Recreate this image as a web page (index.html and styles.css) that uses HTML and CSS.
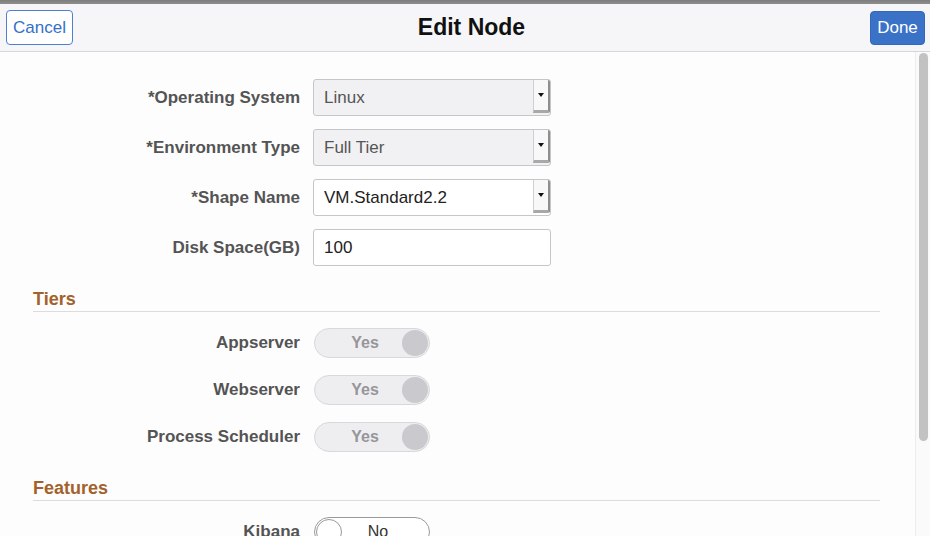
FILE: index.html
```html
<!DOCTYPE html>
<html>
<head>
<meta charset="utf-8">
<title>Edit Node</title>
<link rel="stylesheet" href="styles.css">
</head>
<body>
<div class="page">
  <div class="topstrip"></div>
  <header class="header">
    <button class="btn btn-cancel">Cancel</button>
    <h1 class="title">Edit Node</h1>
    <button class="btn btn-done">Done</button>
  </header>
  <div class="body">
    <main class="content">
      <div class="form">
        <label class="label">*Operating System</label>
        <div class="select disabled"><span class="select-text">Linux</span><span class="select-btn"><span class="tri"></span></span></div>

        <label class="label">*Environment Type</label>
        <div class="select disabled"><span class="select-text">Full Tier</span><span class="select-btn"><span class="tri"></span></span></div>

        <label class="label">*Shape Name</label>
        <div class="select"><span class="select-text">VM.Standard2.2</span><span class="select-btn"><span class="tri"></span></span></div>

        <label class="label">Disk Space(GB)</label>
        <div class="input">100</div>
      </div>

      <h2 class="section">Tiers</h2>
      <div class="toggles">
        <span class="label">Appserver</span>
        <div class="toggle on"><span class="toggle-text">Yes</span><span class="knob"></span></div>
        <span class="label">Webserver</span>
        <div class="toggle on"><span class="toggle-text">Yes</span><span class="knob"></span></div>
        <span class="label">Process Scheduler</span>
        <div class="toggle on"><span class="toggle-text">Yes</span><span class="knob"></span></div>
      </div>

      <h2 class="section section-features">Features</h2>
      <div class="toggles">
        <span class="label">Kibana</span>
        <div class="toggle off"><span class="knob"></span><span class="toggle-text">No</span></div>
      </div>
    </main>
    <div class="scrollbar"><div class="thumb"></div></div>
  </div>
</div>
</body>
</html>
```
FILE: styles.css
```css
* { box-sizing: border-box; }
html, body { margin: 0; padding: 0; }
body {
  font-family: "Liberation Sans", Arial, sans-serif;
  background: #fdfdfd;
  width: 930px;
  height: 536px;
  overflow: hidden;
}
.page {
  display: flex;
  flex-direction: column;
  height: 536px;
}
.topstrip {
  height: 4px;
  background: linear-gradient(#7c7c7c, #8e8e8e);
  flex: none;
}
.header {
  flex: none;
  height: 48px;
  background: #f6f6f8;
  border-bottom: 1px solid #d6d6d8;
  display: flex;
  align-items: center;
  justify-content: space-between;
  padding: 0 5px 0 6px;
}
.btn {
  font-family: "Liberation Sans", Arial, sans-serif;
  font-size: 17px;
  height: 35px;
  border-radius: 4px;
  padding: 0 6px;
  cursor: pointer;
}
.btn-cancel {
  width: 67px;
  background: #ffffff;
  color: #3570c9;
  border: 1px solid #4d81d0;
}
.btn-done {
  width: 55px;
  background: #3a72c7;
  color: #ffffff;
  border: 1px solid #3568b8;
  height: 34px;
}
.title {
  margin: 0;
  font-size: 23px;
  font-weight: bold;
  color: #111;
}
.body {
  flex: 1;
  display: flex;
  min-height: 0;
}
.content {
  flex: 1;
  overflow: hidden;
  padding-top: 27px;
}
.scrollbar {
  flex: none;
  width: 15px;
  background: #fafafa;
  border-left: 1px solid #ececec;
  padding: 1px 1px 0 3px;
}
.thumb {
  width: 9px;
  height: 388px;
  border-radius: 5px;
  background: #c2c2c2;
}
.form {
  display: grid;
  grid-template-columns: 300px 238px;
  column-gap: 13px;
  row-gap: 13px;
  align-items: center;
}
.label {
  text-align: right;
  font-size: 17px;
  font-weight: bold;
  color: #545454;
  white-space: nowrap;
}
.select, .input {
  height: 37px;
  border: 1px solid #c6c6c8;
  border-radius: 3px;
  background: #ffffff;
  font-size: 17px;
  color: #222;
}
.select {
  display: flex;
  align-items: stretch;
}
.select.disabled {
  background: #f1f1f3;
  color: #555;
}
.select-text {
  flex: 1;
  display: flex;
  align-items: center;
  padding-left: 10px;
}
.select-btn {
  width: 17px;
  background: #f8f8f8;
  border-left: 1px solid #d0d0d0;
  border-right: 2px solid #8e8e8e;
  border-bottom: 3px solid #a8a8a8;
  border-radius: 0 2px 2px 0;
  display: flex;
  align-items: center;
  justify-content: center;
  margin-bottom: 2px;
}
.tri {
  width: 0;
  height: 0;
  border-left: 3.5px solid transparent;
  border-right: 3.5px solid transparent;
  border-top: 4px solid #111;
}
.input {
  display: flex;
  align-items: center;
  padding-left: 10px;
}
.section {
  margin: 22px 35px 0 33px;
  padding-bottom: 1px;
  border-bottom: 1px solid #dcdcdc;
  font-size: 18px;
  line-height: 22px;
  font-weight: bold;
  color: #a3612b;
}
.section-features {
  margin-top: 25px;
}
.toggles {
  margin-top: 16px;
  display: grid;
  grid-template-columns: 300px 116px;
  column-gap: 14px;
  row-gap: 17px;
  align-items: center;
}
.toggle {
  height: 30px;
  border-radius: 15px;
  display: flex;
  align-items: center;
  padding: 0 1px;
  font-size: 16px;
  font-weight: bold;
}
.toggle.on {
  background: #eeeef1;
  border: 1px solid #d8d8dc;
  color: #96969a;
}
.toggle.off {
  background: #ffffff;
  border: 1px solid #9a9a9a;
  color: #333;
  font-weight: normal;
}
.toggle-text {
  flex: 1;
  text-align: center;
  padding-left: 12px;
}
.toggle.off .toggle-text {
  padding-left: 0;
  padding-right: 14px;
}
.knob {
  width: 26px;
  height: 26px;
  border-radius: 50%;
  flex: none;
}
.toggle.on .knob {
  background: #c9c9ce;
}
.toggle.off .knob {
  background: #ffffff;
  border: 1px solid #999;
}
```
